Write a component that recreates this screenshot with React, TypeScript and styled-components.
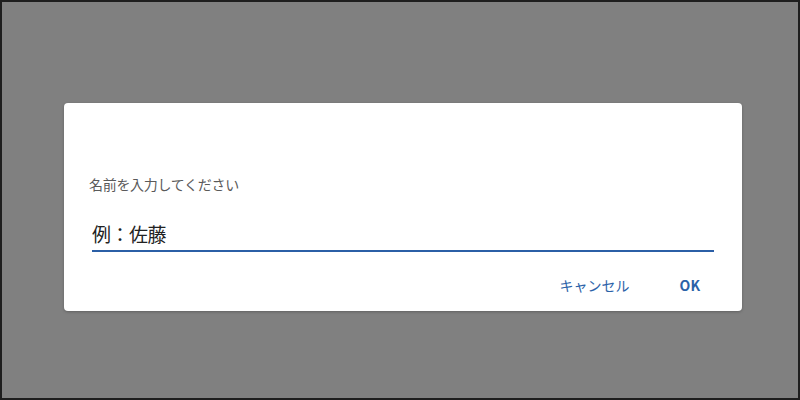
import * as React from 'react';
import styled, {createGlobalStyle} from "styled-components";

const GlobalStyle = createGlobalStyle`
    body {
        margin: 0;
        font-family: "Noto Sans CJK JP", "Noto Sans", sans-serif;
    }
`;

const App = () => {
    const [name, setName] = React.useState("");
    return <Screen>
        <GlobalStyle/>
        <Dialog>
            <Label>名前を入力してください</Label>
            <NameInput
                type="text"
                placeholder="例：佐藤"
                value={name}
                onChange={(e) => setName(e.target.value)}
            />
            <Actions>
                <TextButton>キャンセル</TextButton>
                <TextButton bold>OK</TextButton>
            </Actions>
        </Dialog>
    </Screen>;
}

const Screen = styled.div`
    box-sizing: border-box;
    width: 800px;
    height: 400px;
    border: 2px solid #1e1e1e;
    background: #808080;
    padding: 101px 0 0 62px;
`;
const Dialog = styled.div`
    box-sizing: border-box;
    width: 678px;
    height: 208px;
    background: #fff;
    border-radius: 4px;
    box-shadow: 0 1px 3px rgba(0, 0, 0, 0.25);
    padding: 72px 28px 0 25px;
    display: flex;
    flex-direction: column;
`;
const Label = styled.div`
    font-size: 14px;
    line-height: 18px;
    letter-spacing: -0.3px;
    color: #5a5a5a;
`;
const NameInput = styled.input`
    margin: 27px 0 0 3px;
    padding: 0 0 2px 0;
    border: none;
    border-bottom: 2px solid #2b5fa6;
    outline: none;
    font-family: inherit;
    font-size: 19px;
    line-height: 28px;
    letter-spacing: -0.5px;
    color: #222;
    &::placeholder {
        color: #222;
    }
`;
const Actions = styled.div`
    display: flex;
    justify-content: flex-end;
    gap: 22px;
    margin-top: 19px;
`;
const TextButton = styled.button<{ bold?: boolean }>`
    border: none;
    background: none;
    padding: 4px 14px;
    font-family: inherit;
    font-size: 14px;
    line-height: 20px;
    font-weight: ${p => p.bold ? 700 : 400};
    color: #2b62a8;
    cursor: pointer;
`;

export default App;
